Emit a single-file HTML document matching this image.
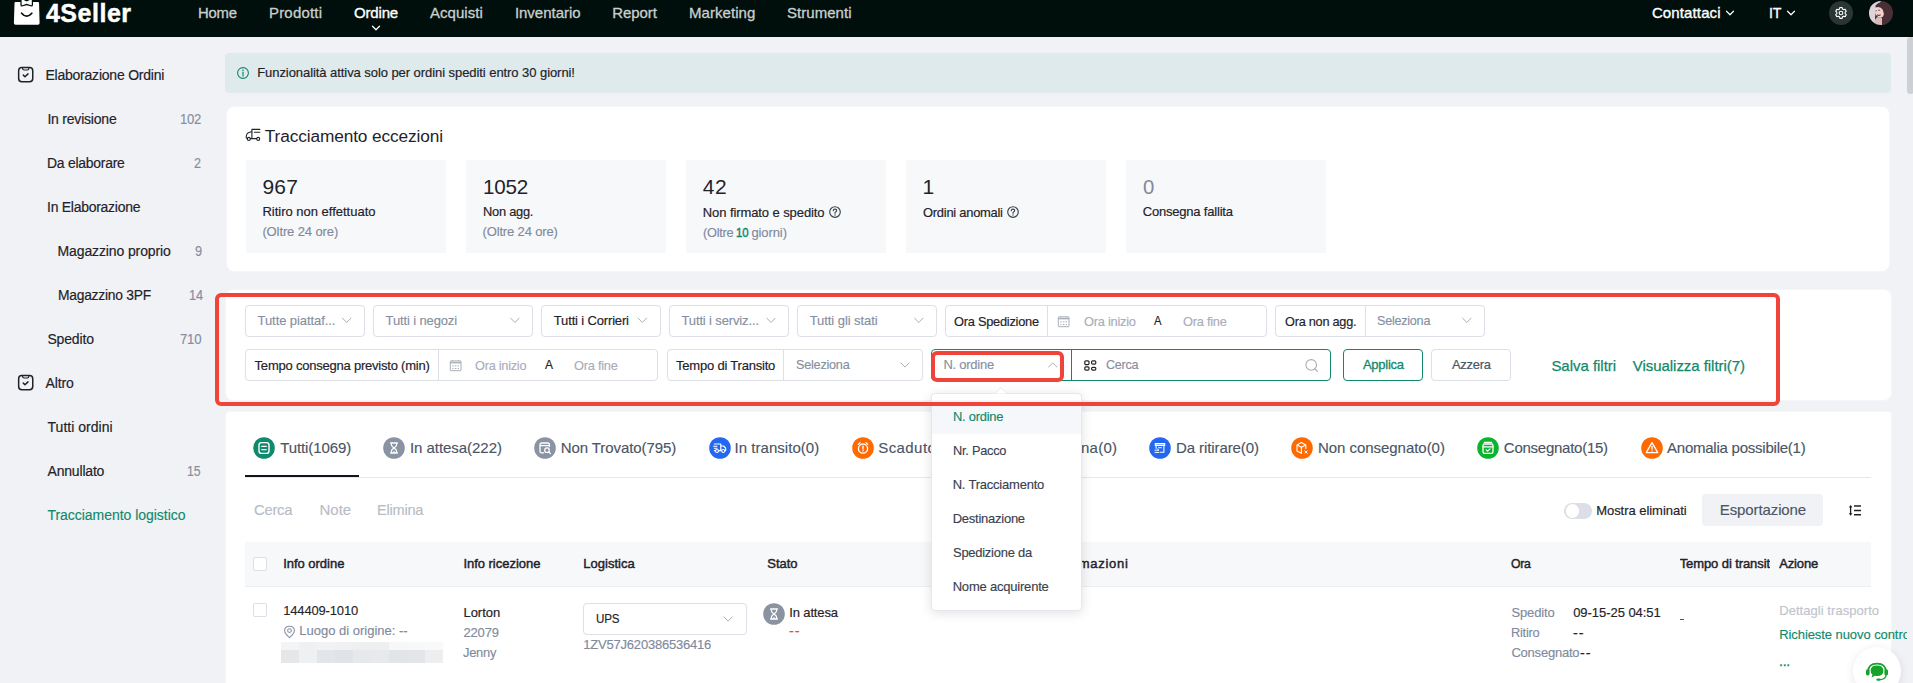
<!DOCTYPE html>
<html lang="it"><head><meta charset="utf-8"><title>4Seller - Tracciamento logistico</title>
<style>
html,body{margin:0;padding:0;}
body{width:1913px;height:683px;overflow:hidden;position:relative;background:#f0f2f6;font-family:"Liberation Sans", sans-serif;}
#pg{position:absolute;left:0;top:0;width:1913px;height:683px;overflow:hidden;}
#pg div,#pg svg,#pg span{position:absolute;box-sizing:border-box;}
#pg span{white-space:nowrap;line-height:20px;height:20px;}
</style></head><body><div id="pg">
<div style="left:0px;top:0px;width:1913px;height:37px;background:#010f0c;"></div>
<svg style="left:12px;top:0px;" width="30" height="26" viewBox="0 0 30 26" fill="none">
<path d="M3.6 2 H26 Q27 2 27.05 3 L27.6 23.1 Q27.6 24.7 26 24.7 H3.5 Q1.9 24.7 1.9 23.1 L2.5 3 Q2.55 2 3.6 2 Z" fill="#fff"/>
<path d="M8.4 -1 H21 V5 Q21 6.6 19.4 6.6 L14.7 5.2 L10 6.6 Q8.4 6.6 8.4 5 Z" fill="#010f0c"/>
<path d="M9.6 -1 L14.7 1.5 L19.8 -1 V4.6 Q19.8 5.4 19 5.2 L14.7 3.7 L10.4 5.2 Q9.6 5.4 9.6 4.6 Z" fill="#fff"/>
<path d="M9.6 13.2 Q14.7 19.2 19.8 13.2" stroke="#010f0c" stroke-width="1.7" stroke-linecap="round"/>
</svg>
<span id="t0" style="left:45.9px;top:3px;font-size:25px;color:#fff;font-weight:700;letter-spacing:0.531px;-webkit-text-stroke:0.45px #fff;">4Seller</span>
<span id="t1" style="left:198.2px;top:3px;font-size:15px;color:#c9cfce;letter-spacing:-0.250px;transform:scaleX(0.9907);transform-origin:0 50%;-webkit-text-stroke:0.3px #c9cfce;">Home</span>
<span id="t2" style="left:269px;top:3px;font-size:15px;color:#c9cfce;letter-spacing:0.185px;-webkit-text-stroke:0.3px #c9cfce;">Prodotti</span>
<span id="t3" style="left:430px;top:3px;font-size:15px;color:#c9cfce;letter-spacing:0.038px;-webkit-text-stroke:0.3px #c9cfce;">Acquisti</span>
<span id="t4" style="left:514.9px;top:3px;font-size:15px;color:#c9cfce;letter-spacing:-0.019px;-webkit-text-stroke:0.3px #c9cfce;">Inventario</span>
<span id="t5" style="left:612.2px;top:3px;font-size:15px;color:#c9cfce;letter-spacing:-0.066px;-webkit-text-stroke:0.3px #c9cfce;">Report</span>
<span id="t6" style="left:689px;top:3px;font-size:15px;color:#c9cfce;letter-spacing:0.055px;-webkit-text-stroke:0.3px #c9cfce;">Marketing</span>
<span id="t7" style="left:786.9px;top:3px;font-size:15px;color:#c9cfce;letter-spacing:0.062px;-webkit-text-stroke:0.3px #c9cfce;">Strumenti</span>
<span id="t8" style="left:354px;top:3px;font-size:15px;color:#fff;letter-spacing:-0.166px;-webkit-text-stroke:0.35px #fff;">Ordine</span>
<svg style="left:0;top:0" width="1913" height="683" fill="none"><path d="M372.5 26.25 L376 29.75 L379.5 26.25" stroke="#fff" stroke-width="1.3" stroke-linecap="round" stroke-linejoin="round"/></svg>
<span id="t9" style="left:1651.9px;top:3px;font-size:15px;color:#fff;letter-spacing:0.128px;-webkit-text-stroke:0.35px #fff;">Contattaci</span>
<svg style="left:0;top:0" width="1913" height="683" fill="none"><path d="M1726.5 11.25 L1730 14.75 L1733.5 11.25" stroke="#fff" stroke-width="1.2" stroke-linecap="round" stroke-linejoin="round"/></svg>
<span id="t10" style="left:1768.5px;top:3px;font-size:15px;color:#fff;letter-spacing:-0.250px;transform:scaleX(0.9394);transform-origin:0 50%;-webkit-text-stroke:0.35px #fff;">IT</span>
<svg style="left:0;top:0" width="1913" height="683" fill="none"><path d="M1787.5 11.25 L1791 14.75 L1794.5 11.25" stroke="#fff" stroke-width="1.2" stroke-linecap="round" stroke-linejoin="round"/></svg>
<div style="left:1829px;top:1px;width:24px;height:24px;border-radius:50%;background:#2a3634;"></div>
<svg style="left:1833px;top:5px;" width="16" height="16" viewBox="0 0 16 16" fill="none">
<g transform="translate(8 8) scale(.86) translate(-8 -8)"><circle cx="8" cy="8" r="2.1" stroke="#fff" stroke-width="1.3"/>
<path d="M6.7 1.6 h2.6 l.45 1.75 l1.35 .78 l1.75 -.5 l1.3 2.25 l-1.3 1.25 v1.56 l1.3 1.25 l-1.3 2.25 l-1.75 -.5 l-1.35 .78 l-.45 1.75 h-2.6 l-.45 -1.75 l-1.35 -.78 l-1.75 .5 l-1.3 -2.25 l1.3 -1.25 v-1.56 l-1.3 -1.25 l1.3 -2.25 l1.75 .5 l1.35 -.78 z" stroke="#fff" stroke-width="1.3" stroke-linejoin="round"/></g>
</svg>
<svg style="left:1869px;top:1px;" width="24" height="24" viewBox="0 0 24 24" fill="none">
<defs><clipPath id="av"><circle cx="12" cy="12" r="12"/></clipPath></defs>
<g clip-path="url(#av)">
<rect width="24" height="24" fill="#4a3036"/>
<path d="M0 0 H12 Q5 9 6 24 H0 Z" fill="#ddd3d8"/>
<path d="M5 24 Q5 18 8.6 16 L13 17 V24 Z" fill="#d9bdb9"/>
<ellipse cx="10.6" cy="10.4" rx="4.6" ry="6.4" transform="rotate(-14 10.6 10.4)" fill="#ecd5d0"/>
<path d="M6.5 4.5 Q10 0 16 1.5 Q22 4 21.5 12 Q21 19 19 24 H13 Q16.5 15 13.6 8.6 Q11.5 5 6.5 6.4 Z" fill="#4a3036"/>
<path d="M9 9.2 h2.2 M6.4 9.8 h1.4" stroke="#5a3b40" stroke-width=".8"/>
<path d="M8.4 14 q1.3 1 2.8 -.1" stroke="#c22b2b" stroke-width="1.2" stroke-linecap="round"/>
</g></svg>
<svg style="left:17.3px;top:66.3px;" width="17" height="17" viewBox="0 0 17 17" fill="none">
<rect x="1.65" y="1.55" width="14.1" height="14.1" rx="3.2" stroke="#1f2329" stroke-width="1.5"/>
<path d="M5.6 1.8 V2.5 Q5.6 4 7.1 4 H10.3 Q11.8 4 11.8 2.5 V1.8" stroke="#1f2329" stroke-width="1.2"/>
<path d="M6.3 9.1 L8 10.8 L11 7.9" stroke="#1f2329" stroke-width="1.5" stroke-linecap="round" stroke-linejoin="round"/>
</svg>
<span id="t11" style="left:45.4px;top:65px;font-size:14px;color:#1f2329;letter-spacing:-0.220px;-webkit-text-stroke:0.18px #1f2329;">Elaborazione Ordini</span>
<span id="t12" style="left:47.4px;top:109px;font-size:14px;color:#1f2329;letter-spacing:-0.209px;-webkit-text-stroke:0.18px #1f2329;">In revisione</span>
<span id="t13" style="left:179.7px;top:109px;font-size:14px;color:#858e9f;letter-spacing:-0.250px;transform:scaleX(0.9318);transform-origin:0 50%;-webkit-text-stroke:0.14px #858e9f;">102</span>
<span id="t14" style="left:47.4px;top:153px;font-size:14px;color:#1f2329;letter-spacing:-0.250px;transform:scaleX(0.9950);transform-origin:0 50%;-webkit-text-stroke:0.18px #1f2329;">Da elaborare</span>
<span id="t15" style="left:194px;top:153px;font-size:14px;color:#858e9f;transform:scaleX(0.8978);transform-origin:0 50%;-webkit-text-stroke:0.14px #858e9f;">2</span>
<span id="t16" style="left:47.4px;top:197px;font-size:14px;color:#1f2329;letter-spacing:-0.250px;transform:scaleX(0.9968);transform-origin:0 50%;-webkit-text-stroke:0.18px #1f2329;">In Elaborazione</span>
<span id="t17" style="left:57.5px;top:241px;font-size:14px;color:#1f2329;letter-spacing:-0.117px;-webkit-text-stroke:0.18px #1f2329;">Magazzino proprio</span>
<span id="t18" style="left:195.3px;top:241px;font-size:14px;color:#858e9f;transform:scaleX(0.9106);transform-origin:0 50%;-webkit-text-stroke:0.14px #858e9f;">9</span>
<span id="t19" style="left:57.5px;top:285px;font-size:14px;color:#1f2329;letter-spacing:-0.250px;transform:scaleX(0.9875);transform-origin:0 50%;-webkit-text-stroke:0.18px #1f2329;">Magazzino 3PF</span>
<span id="t20" style="left:188.8px;top:285px;font-size:14px;color:#858e9f;letter-spacing:-0.250px;transform:scaleX(0.9134);transform-origin:0 50%;-webkit-text-stroke:0.14px #858e9f;">14</span>
<span id="t21" style="left:47.4px;top:329px;font-size:14px;color:#1f2329;letter-spacing:-0.147px;-webkit-text-stroke:0.18px #1f2329;">Spedito</span>
<span id="t22" style="left:179.5px;top:329px;font-size:14px;color:#858e9f;letter-spacing:-0.250px;transform:scaleX(0.9405);transform-origin:0 50%;-webkit-text-stroke:0.14px #858e9f;">710</span>
<svg style="left:17.3px;top:374.3px;" width="17" height="17" viewBox="0 0 17 17" fill="none">
<rect x="1.65" y="1.55" width="14.1" height="14.1" rx="3.2" stroke="#1f2329" stroke-width="1.5"/>
<path d="M5.6 1.8 V2.5 Q5.6 4 7.1 4 H10.3 Q11.8 4 11.8 2.5 V1.8" stroke="#1f2329" stroke-width="1.2"/>
<path d="M6.3 9.1 L8 10.8 L11 7.9" stroke="#1f2329" stroke-width="1.5" stroke-linecap="round" stroke-linejoin="round"/>
</svg>
<span id="t23" style="left:45.5px;top:373px;font-size:14px;color:#1f2329;letter-spacing:-0.099px;-webkit-text-stroke:0.18px #1f2329;">Altro</span>
<span id="t24" style="left:47.5px;top:417px;font-size:14px;color:#1f2329;letter-spacing:0.032px;-webkit-text-stroke:0.18px #1f2329;">Tutti ordini</span>
<span id="t25" style="left:47.5px;top:461px;font-size:14px;color:#1f2329;letter-spacing:-0.186px;-webkit-text-stroke:0.18px #1f2329;">Annullato</span>
<span id="t26" style="left:187px;top:461px;font-size:14px;color:#858e9f;letter-spacing:-0.250px;transform:scaleX(0.8807);transform-origin:0 50%;-webkit-text-stroke:0.14px #858e9f;">15</span>
<span id="t27" style="left:47.5px;top:505px;font-size:14px;color:#10896b;letter-spacing:-0.036px;-webkit-text-stroke:0.14px #10896b;">Tracciamento logistico</span>
<div style="left:225px;top:53px;width:1666px;height:40px;background:#deeaeb;border-radius:4px;"></div>
<svg style="left:236px;top:66px;" width="14" height="14" viewBox="0 0 14 14" fill="none"><circle cx="7" cy="7" r="5.4" stroke="#10896b" stroke-width="1.1"/><path d="M7 6.2 V10" stroke="#10896b" stroke-width="1.2" stroke-linecap="round"/><circle cx="7" cy="4.2" r=".8" fill="#10896b"/></svg>
<span id="t28" style="left:257.2px;top:63px;font-size:13px;color:#1f2329;letter-spacing:-0.064px;-webkit-text-stroke:0.18px #1f2329;">Funzionalità attiva solo per ordini spediti entro 30 giorni!</span>
<div style="left:226px;top:106px;width:1664px;height:166px;background:#fff;border-radius:8px;border:1px solid #f5f6fa;"></div>
<svg style="left:245px;top:128px;" width="16" height="15" viewBox="0 0 16 15" fill="none">
<path d="M6.9 3.7 Q1.5 4 1.2 8.6 V9.4 Q1.2 10.3 2.2 10.5" stroke="#1f2329" stroke-width="1.1" stroke-linecap="round"/>
<path d="M6.9 1.4 V10.3 M6.9 1.4 H14.8 M9.4 4.2 H14.8 M5.4 10.6 H11.6" stroke="#1f2329" stroke-width="1.1" stroke-linecap="round"/>
<circle cx="3.8" cy="10.9" r="1.5" stroke="#1f2329" stroke-width="1.1"/>
<circle cx="13.2" cy="10.9" r="1.5" stroke="#1f2329" stroke-width="1.1"/>
</svg>
<span id="t29" style="left:264.8px;top:126px;font-size:17.3px;color:#1f2329;letter-spacing:-0.128px;">Tracciamento eccezioni</span>
<div style="left:246px;top:160px;width:200px;height:92.6px;background:#f7f8fa;"></div>
<div style="left:466px;top:160px;width:200px;height:92.6px;background:#f7f8fa;"></div>
<div style="left:686px;top:160px;width:200px;height:92.6px;background:#f7f8fa;"></div>
<div style="left:906px;top:160px;width:200px;height:92.6px;background:#f7f8fa;"></div>
<div style="left:1126px;top:160px;width:200px;height:92.6px;background:#f7f8fa;"></div>
<span id="t30" style="left:262.4px;top:177px;font-size:21px;color:#1f2329;letter-spacing:0.277px;">967</span>
<span id="t31" style="left:262.4px;top:202px;font-size:13px;color:#1f2329;letter-spacing:-0.007px;-webkit-text-stroke:0.18px #1f2329;">Ritiro non effettuato</span>
<span id="t32" style="left:262.4px;top:222px;font-size:13px;color:#7f8a9c;letter-spacing:-0.109px;-webkit-text-stroke:0.14px #7f8a9c;">(Oltre 24 ore)</span>
<span id="t33" style="left:482.5px;top:177px;font-size:21px;color:#1f2329;letter-spacing:-0.250px;transform:scaleX(0.9811);transform-origin:0 50%;">1052</span>
<span id="t34" style="left:482.5px;top:202px;font-size:13px;color:#1f2329;letter-spacing:-0.250px;transform:scaleX(0.9879);transform-origin:0 50%;-webkit-text-stroke:0.18px #1f2329;">Non agg.</span>
<span id="t35" style="left:482.5px;top:222px;font-size:13px;color:#7f8a9c;letter-spacing:-0.147px;-webkit-text-stroke:0.14px #7f8a9c;">(Oltre 24 ore)</span>
<span id="t36" style="left:702.8px;top:177px;font-size:21px;color:#1f2329;letter-spacing:0.441px;">42</span>
<span id="t37" style="left:702.8px;top:203px;font-size:13px;color:#1f2329;letter-spacing:-0.089px;-webkit-text-stroke:0.18px #1f2329;">Non firmato e spedito</span>
<svg style="left:828.3px;top:205px;" width="14" height="14" viewBox="0 0 14 14" fill="none"><circle cx="7" cy="7" r="5.3" stroke="#3b424d" stroke-width="1.15"/><path d="M5.3 5.7 Q5.3 4.1 7 4.1 Q8.7 4.1 8.7 5.6 Q8.7 6.6 7.6 7.1 Q7 7.4 7 8.3" stroke="#3b424d" stroke-width="1.15" stroke-linecap="round"/><circle cx="7" cy="10" r=".7" fill="#3b424d"/></svg>
<span id="t38" style="left:702.8px;top:223px;font-size:13px;color:#7f8a9c;letter-spacing:-0.250px;transform:scaleX(0.9824);transform-origin:0 50%;-webkit-text-stroke:0.14px #7f8a9c;">(Oltre</span>
<span id="t39" style="left:736.2px;top:223px;font-size:13px;color:#10896b;-webkit-text-stroke:0.45px #10896b;letter-spacing:-0.250px;transform:scaleX(0.8791);transform-origin:0 50%;">10</span>
<span id="t40" style="left:751.4px;top:223px;font-size:13px;color:#7f8a9c;letter-spacing:-0.087px;-webkit-text-stroke:0.14px #7f8a9c;">giorni)</span>
<span id="t41" style="left:922.6px;top:177px;font-size:21px;color:#1f2329;">1</span>
<span id="t42" style="left:922.6px;top:203px;font-size:13px;color:#1f2329;letter-spacing:-0.250px;transform:scaleX(0.9928);transform-origin:0 50%;-webkit-text-stroke:0.18px #1f2329;">Ordini anomali</span>
<svg style="left:1006px;top:205px;" width="14" height="14" viewBox="0 0 14 14" fill="none"><circle cx="7" cy="7" r="5.3" stroke="#3b424d" stroke-width="1.15"/><path d="M5.3 5.7 Q5.3 4.1 7 4.1 Q8.7 4.1 8.7 5.6 Q8.7 6.6 7.6 7.1 Q7 7.4 7 8.3" stroke="#3b424d" stroke-width="1.15" stroke-linecap="round"/><circle cx="7" cy="10" r=".7" fill="#3b424d"/></svg>
<span id="t43" style="left:1142.7px;top:177px;font-size:21px;color:#7f8a9c;transform:scaleX(0.9668);transform-origin:0 50%;">0</span>
<span id="t44" style="left:1142.7px;top:202px;font-size:13px;color:#1f2329;letter-spacing:-0.196px;-webkit-text-stroke:0.18px #1f2329;">Consegna fallita</span>
<div style="left:225px;top:289px;width:1667px;height:112px;background:#fff;border-radius:8px;border:1px solid #f5f6fa;"></div>
<div style="left:245px;top:305px;width:120px;height:32px;border:1px solid #dcdfe6;border-radius:4px;background:#fff;"></div>
<span id="t45" style="left:257.6px;top:311px;font-size:13px;color:#858fa1;letter-spacing:-0.081px;-webkit-text-stroke:0.14px #858fa1;">Tutte piattaf...</span>
<svg style="left:0;top:0" width="1913" height="683" fill="none"><path d="M342.5 318.2 L346.7 322.40000000000003 L350.9 318.2" stroke="#a8adb8" stroke-width="1.0" stroke-linecap="round" stroke-linejoin="round"/></svg>
<div style="left:373.3px;top:305px;width:159.4px;height:32px;border:1px solid #dcdfe6;border-radius:4px;background:#fff;"></div>
<span id="t46" style="left:385.6px;top:311px;font-size:13px;color:#858fa1;letter-spacing:-0.133px;-webkit-text-stroke:0.14px #858fa1;">Tutti i negozi</span>
<svg style="left:0;top:0" width="1913" height="683" fill="none"><path d="M510.7 318.2 L514.9 322.40000000000003 L519.1 318.2" stroke="#a8adb8" stroke-width="1.0" stroke-linecap="round" stroke-linejoin="round"/></svg>
<div style="left:541.2px;top:305px;width:119.8px;height:32px;border:1px solid #dcdfe6;border-radius:4px;background:#fff;"></div>
<span id="t47" style="left:553.8px;top:311px;font-size:13px;color:#1f2329;letter-spacing:-0.155px;-webkit-text-stroke:0.18px #1f2329;">Tutti i Corrieri</span>
<svg style="left:0;top:0" width="1913" height="683" fill="none"><path d="M638.0999999999999 318.2 L642.3 322.40000000000003 L646.5 318.2" stroke="#a8adb8" stroke-width="1.0" stroke-linecap="round" stroke-linejoin="round"/></svg>
<div style="left:669.2px;top:305px;width:119.8px;height:32px;border:1px solid #dcdfe6;border-radius:4px;background:#fff;"></div>
<span id="t48" style="left:681.5px;top:311px;font-size:13px;color:#858fa1;letter-spacing:-0.138px;-webkit-text-stroke:0.14px #858fa1;">Tutti i serviz...</span>
<svg style="left:0;top:0" width="1913" height="683" fill="none"><path d="M766.8 318.2 L771 322.40000000000003 L775.2 318.2" stroke="#a8adb8" stroke-width="1.0" stroke-linecap="round" stroke-linejoin="round"/></svg>
<div style="left:797.4px;top:305px;width:139.7px;height:32px;border:1px solid #dcdfe6;border-radius:4px;background:#fff;"></div>
<span id="t49" style="left:809.7px;top:311px;font-size:13px;color:#858fa1;letter-spacing:-0.062px;-webkit-text-stroke:0.14px #858fa1;">Tutti gli stati</span>
<svg style="left:0;top:0" width="1913" height="683" fill="none"><path d="M914.5999999999999 318.2 L918.8 322.40000000000003 L923.0 318.2" stroke="#a8adb8" stroke-width="1.0" stroke-linecap="round" stroke-linejoin="round"/></svg>
<div style="left:945.4px;top:305px;width:321.2px;height:32px;border:1px solid #dcdfe6;border-radius:4px;background:#fff;"></div>
<div style="left:1047.4px;top:305px;width:1px;height:32px;background:#dcdfe6;"></div>
<span id="t50" style="left:954.2px;top:312px;font-size:13px;color:#1f2329;letter-spacing:-0.250px;transform:scaleX(0.9852);transform-origin:0 50%;-webkit-text-stroke:0.18px #1f2329;">Ora Spedizione</span>
<svg style="left:1057.4px;top:314.6px;" width="13" height="13" viewBox="0 0 13 13" fill="none"><rect x="1.3" y="1.9" width="10.7" height="9.8" rx=".4" stroke="#a9aeb8" stroke-width="1"/><path d="M1.3 3.6 H12" stroke="#a9aeb8" stroke-width="1.5"/><path d="M3.6 1 V2 M9.7 1 V2" stroke="#a9aeb8" stroke-width=".9"/><path d="M3.3 6.9 h1.5 M5.9 6.9 h1.5 M8.5 6.9 h1.5 M3.3 9.5 h1.2 M5.9 9.5 h1.5 M8.8 9.5 h1.2" stroke="#a9aeb8" stroke-width="1"/></svg>
<span id="t51" style="left:1084.2px;top:312px;font-size:13px;color:#a8adb8;letter-spacing:-0.250px;transform:scaleX(0.9853);transform-origin:0 50%;-webkit-text-stroke:0.14px #a8adb8;">Ora inizio</span>
<span id="t52" style="left:1153.7px;top:311px;font-size:13px;color:#1f2329;transform:scaleX(0.8649);transform-origin:0 50%;-webkit-text-stroke:0.18px #1f2329;">A</span>
<span id="t53" style="left:1183px;top:312px;font-size:13px;color:#a8adb8;letter-spacing:-0.250px;transform:scaleX(0.9865);transform-origin:0 50%;-webkit-text-stroke:0.14px #a8adb8;">Ora fine</span>
<div style="left:1275.4px;top:305px;width:209.2px;height:32px;border:1px solid #dcdfe6;border-radius:4px;background:#fff;"></div>
<div style="left:1365.2px;top:305px;width:1px;height:32px;background:#dcdfe6;"></div>
<span id="t54" style="left:1284.9px;top:312px;font-size:13px;color:#1f2329;letter-spacing:-0.250px;transform:scaleX(0.9776);transform-origin:0 50%;-webkit-text-stroke:0.18px #1f2329;">Ora non agg.</span>
<span id="t55" style="left:1377px;top:311px;font-size:13px;color:#858fa1;letter-spacing:-0.250px;transform:scaleX(0.9690);transform-origin:0 50%;-webkit-text-stroke:0.14px #858fa1;">Seleziona</span>
<svg style="left:0;top:0" width="1913" height="683" fill="none"><path d="M1462.6 318.2 L1466.8 322.40000000000003 L1471.0 318.2" stroke="#a8adb8" stroke-width="1.0" stroke-linecap="round" stroke-linejoin="round"/></svg>
<div style="left:245px;top:349px;width:412.9px;height:32px;border:1px solid #dcdfe6;border-radius:4px;background:#fff;"></div>
<div style="left:438.1px;top:349px;width:1px;height:32px;background:#dcdfe6;"></div>
<span id="t56" style="left:254.6px;top:356px;font-size:13px;color:#1f2329;letter-spacing:-0.220px;-webkit-text-stroke:0.18px #1f2329;">Tempo consegna previsto (min)</span>
<svg style="left:448.7px;top:358.6px;" width="13" height="13" viewBox="0 0 13 13" fill="none"><rect x="1.3" y="1.9" width="10.7" height="9.8" rx=".4" stroke="#a9aeb8" stroke-width="1"/><path d="M1.3 3.6 H12" stroke="#a9aeb8" stroke-width="1.5"/><path d="M3.6 1 V2 M9.7 1 V2" stroke="#a9aeb8" stroke-width=".9"/><path d="M3.3 6.9 h1.5 M5.9 6.9 h1.5 M8.5 6.9 h1.5 M3.3 9.5 h1.2 M5.9 9.5 h1.5 M8.8 9.5 h1.2" stroke="#a9aeb8" stroke-width="1"/></svg>
<span id="t57" style="left:475.2px;top:356px;font-size:13px;color:#a8adb8;letter-spacing:-0.250px;transform:scaleX(0.9778);transform-origin:0 50%;-webkit-text-stroke:0.14px #a8adb8;">Ora inizio</span>
<span id="t58" style="left:544.5px;top:355px;font-size:13px;color:#1f2329;transform:scaleX(0.9225);transform-origin:0 50%;-webkit-text-stroke:0.18px #1f2329;">A</span>
<span id="t59" style="left:573.8px;top:356px;font-size:13px;color:#a8adb8;letter-spacing:-0.250px;transform:scaleX(0.9865);transform-origin:0 50%;-webkit-text-stroke:0.14px #a8adb8;">Ora fine</span>
<div style="left:666.7px;top:349px;width:255.9px;height:32px;border:1px solid #dcdfe6;border-radius:4px;background:#fff;"></div>
<div style="left:783.1px;top:349px;width:1px;height:32px;background:#dcdfe6;"></div>
<span id="t60" style="left:676px;top:356px;font-size:13px;color:#1f2329;letter-spacing:-0.207px;-webkit-text-stroke:0.18px #1f2329;">Tempo di Transito</span>
<span id="t61" style="left:795.6px;top:355px;font-size:13px;color:#858fa1;letter-spacing:-0.250px;transform:scaleX(0.9744);transform-origin:0 50%;-webkit-text-stroke:0.14px #858fa1;">Seleziona</span>
<svg style="left:0;top:0" width="1913" height="683" fill="none"><path d="M900.8 362.9 L905 367.1 L909.2 362.9" stroke="#a8adb8" stroke-width="1.0" stroke-linecap="round" stroke-linejoin="round"/></svg>
<div style="left:931px;top:349px;width:399.6px;height:32px;border:1px solid #10896b;border-radius:4px;background:#fff;"></div>
<div style="left:1071px;top:349px;width:1px;height:32px;background:#10896b;"></div>
<span id="t62" style="left:943.4px;top:355px;font-size:13px;color:#858fa1;letter-spacing:-0.250px;-webkit-text-stroke:0.14px #858fa1;">N. ordine</span>
<svg style="left:0;top:0" width="1913" height="683" fill="none"><path d="M1048.6 367.1 L1052.8 362.9 L1057.0 367.1" stroke="#a8adb8" stroke-width="1.0" stroke-linecap="round" stroke-linejoin="round"/></svg>
<svg style="left:1083.6px;top:359.6px;" width="13" height="12" viewBox="0 0 13 12" fill="none">
<rect x=".8" y=".8" width="4.2" height="3.8" rx="1.1" stroke="#1f2329" stroke-width="1.2"/>
<rect x="7.6" y=".8" width="4.2" height="3.4" rx="1.1" stroke="#1f2329" stroke-width="1.2"/>
<rect x=".8" y="6.8" width="4.2" height="3.4" rx="1.1" stroke="#1f2329" stroke-width="1.2"/>
<rect x="7.6" y="7.4" width="4.2" height="2.8" rx="1.1" stroke="#1f2329" stroke-width="1.2"/>
</svg>
<span id="t63" style="left:1105.8px;top:355px;font-size:13px;color:#858fa1;letter-spacing:-0.250px;transform:scaleX(0.9677);transform-origin:0 50%;-webkit-text-stroke:0.14px #858fa1;">Cerca</span>
<svg style="left:1304px;top:358px;" width="15" height="15" viewBox="0 0 15 15" fill="none"><circle cx="7.2" cy="6.9" r="5.3" stroke="#a8adb8" stroke-width="1.1"/><path d="M11 11 L13.4 13.4" stroke="#a8adb8" stroke-width="1.1" stroke-linecap="round"/></svg>
<div style="left:931.2px;top:350.6px;width:132.6px;height:31.8px;border:4px solid #f0443a;border-radius:6px;"></div>
<div style="left:1343px;top:349px;width:79.7px;height:32px;border:1px solid #10896b;border-radius:4px;background:#fff;"></div>
<span id="t64" style="left:1362.9px;top:355px;font-size:13px;color:#10896b;letter-spacing:-0.240px;-webkit-text-stroke:0.3px #10896b;">Applica</span>
<div style="left:1431.2px;top:349px;width:79.5px;height:32px;border:1px solid #dcdfe6;border-radius:4px;background:#fff;"></div>
<span id="t65" style="left:1452.3px;top:355px;font-size:13px;color:#4a5565;letter-spacing:-0.250px;transform:scaleX(0.9919);transform-origin:0 50%;-webkit-text-stroke:0.2px #4a5565;">Azzera</span>
<span id="t66" style="left:1551.4px;top:356px;font-size:15px;color:#10896b;letter-spacing:-0.030px;-webkit-text-stroke:0.25px #10896b;">Salva filtri</span>
<span id="t67" style="left:1632.8px;top:356px;font-size:15px;color:#10896b;letter-spacing:-0.047px;-webkit-text-stroke:0.25px #10896b;">Visualizza filtri(7)</span>
<div style="left:225px;top:411px;width:1667px;height:300px;background:#fff;border-radius:4px 4px 0 0;border:1px solid #f5f6fa;"></div>
<div style="left:245px;top:477px;width:1626px;height:1px;background:#e6e8ee;"></div>
<div style="left:245px;top:475px;width:113.8px;height:2px;background:#12161c;"></div>
<svg style="left:253.1px;top:436.8px;" width="22" height="22" viewBox="0 0 22 22" fill="none"><circle cx="11" cy="11" r="10.8" fill="#0f8a6c"/><rect x="6" y="5.6" width="10" height="10.8" rx="2.4" stroke="#fff" stroke-width="1.4"/><path d="M8.8 9.4 H13.2 M8.8 12.6 H13.2" stroke="#fff" stroke-width="1.3" stroke-linecap="round"/></svg>
<span id="t68" style="left:280.2px;top:438px;font-size:15px;color:#4a5565;letter-spacing:-0.098px;-webkit-text-stroke:0.14px #4a5565;">Tutti(1069)</span>
<svg style="left:383.1px;top:436.8px;" width="22" height="22" viewBox="0 0 22 22" fill="none"><circle cx="11" cy="11" r="10.8" fill="#8a93a2"/><path d="M7.6 6 H14.4 M7.6 16 H14.4" stroke="#fff" stroke-width="1.3" stroke-linecap="round"/><path d="M8.4 6.2 V7.8 Q8.4 9.3 11 11 Q13.6 9.3 13.6 7.8 V6.2 M8.4 15.8 V14.2 Q8.4 12.7 11 11 Q13.6 12.7 13.6 14.2 V15.8" stroke="#fff" stroke-width="1.2"/><path d="M9.5 15.4 Q11 13 12.5 15.4 Z" fill="#fff"/></svg>
<span id="t69" style="left:409.9px;top:438px;font-size:15px;color:#4a5565;letter-spacing:-0.036px;-webkit-text-stroke:0.14px #4a5565;">In attesa(222)</span>
<svg style="left:534px;top:436.8px;" width="22" height="22" viewBox="0 0 22 22" fill="none"><circle cx="11" cy="11" r="10.8" fill="#8a93a2"/><path d="M15.4 9.6 V7.6 Q15.4 6 13.8 6 H7.6 Q6 6 6 7.6 V14.2 Q6 15.8 7.6 15.8 H9.6" stroke="#fff" stroke-width="1.3" stroke-linecap="round"/><path d="M6 8.6 H15.4" stroke="#fff" stroke-width="1.2"/><circle cx="13" cy="13.2" r="2.3" stroke="#fff" stroke-width="1.2"/><path d="M14.8 15 L16.4 16.6" stroke="#fff" stroke-width="1.2" stroke-linecap="round"/></svg>
<span id="t70" style="left:560.8px;top:438px;font-size:15px;color:#4a5565;letter-spacing:-0.089px;-webkit-text-stroke:0.14px #4a5565;">Non Trovato(795)</span>
<svg style="left:709.1px;top:436.8px;" width="22" height="22" viewBox="0 0 22 22" fill="none"><circle cx="11" cy="11" r="10.8" fill="#2468f2"/><path d="M5.4 7 H11.8 V13.6 H10.2 M5.4 13.6 H6" stroke="#fff" stroke-width="1.2" stroke-linecap="round" stroke-linejoin="round"/><path d="M11.8 9 H14.6 L16.6 11.2 V13.6 H16" stroke="#fff" stroke-width="1.2" stroke-linejoin="round"/><circle cx="8" cy="14" r="1.5" stroke="#fff" stroke-width="1.1"/><circle cx="14.2" cy="14" r="1.5" stroke="#fff" stroke-width="1.1"/><path d="M4.6 9.2 H8 M5.4 11.2 H8" stroke="#fff" stroke-width="1.1" stroke-linecap="round"/></svg>
<span id="t71" style="left:734.6px;top:438px;font-size:15px;color:#4a5565;letter-spacing:0.031px;-webkit-text-stroke:0.14px #4a5565;">In transito(0)</span>
<svg style="left:852.1px;top:436.8px;" width="22" height="22" viewBox="0 0 22 22" fill="none"><circle cx="11" cy="11" r="10.8" fill="#ff6a00"/><circle cx="11" cy="11.6" r="4.6" stroke="#fff" stroke-width="1.3"/><path d="M11 9.2 V12" stroke="#fff" stroke-width="1.3" stroke-linecap="round"/><circle cx="11" cy="13.8" r=".75" fill="#fff"/><path d="M6.2 7.4 L8 5.8 M15.8 7.4 L14 5.8" stroke="#fff" stroke-width="1.3" stroke-linecap="round"/></svg>
<span id="t72" style="left:878.2px;top:438px;font-size:15px;color:#4a5565;letter-spacing:0.436px;-webkit-text-stroke:0.14px #4a5565;">Scaduto(0)</span>
<svg style="left:987.6px;top:436.8px;" width="22" height="22" viewBox="0 0 22 22" fill="none"><circle cx="11" cy="11" r="10.8" fill="#2468f2"/><path d="M6.3 8.4 V6.6 H15.7 V8.4 Z" stroke="#fff" stroke-width="1.1" stroke-linejoin="round"/><path d="M7.1 8.6 V11.2 M14.9 8.6 V15.2 H11.4" stroke="#fff" stroke-width="1.1" stroke-linecap="round" stroke-linejoin="round"/><path d="M9.6 10.7 H12.4" stroke="#fff" stroke-width="1" stroke-linecap="round"/><path d="M6 13.2 H10 L8.7 12 M6 15.4 H10" stroke="#fff" stroke-width="1" stroke-linecap="round" stroke-linejoin="round"/></svg>
<span id="t73" style="left:1013.8px;top:438px;font-size:15px;color:#4a5565;letter-spacing:0.240px;-webkit-text-stroke:0.14px #4a5565;">In consegna(0)</span>
<svg style="left:1149.1px;top:436.8px;" width="22" height="22" viewBox="0 0 22 22" fill="none"><circle cx="11" cy="11" r="10.8" fill="#2468f2"/><path d="M6.3 8.4 V6.6 H15.7 V8.4 Z" stroke="#fff" stroke-width="1.1" stroke-linejoin="round"/><path d="M7.1 8.6 V11.2 M14.9 8.6 V15.2 H11.4" stroke="#fff" stroke-width="1.1" stroke-linecap="round" stroke-linejoin="round"/><path d="M9.6 10.7 H12.4" stroke="#fff" stroke-width="1" stroke-linecap="round"/><path d="M6 13.2 H10 L8.7 12 M6 15.4 H10" stroke="#fff" stroke-width="1" stroke-linecap="round" stroke-linejoin="round"/></svg>
<span id="t74" style="left:1176.1px;top:438px;font-size:15px;color:#4a5565;letter-spacing:-0.107px;-webkit-text-stroke:0.14px #4a5565;">Da ritirare(0)</span>
<svg style="left:1291.2px;top:436.8px;" width="22" height="22" viewBox="0 0 22 22" fill="none"><circle cx="11" cy="11" r="10.8" fill="#ff6a00"/><path d="M10.4 5.6 L14.8 7.9 V11.4 M10.4 16.2 L6 13.9 V7.9 L10.4 5.6" stroke="#fff" stroke-width="1.1" stroke-linejoin="round" stroke-linecap="round"/><path d="M6 7.9 L10.4 10.2 L14.8 7.9 M10.4 10.2 V16.2" stroke="#fff" stroke-width="1.1" stroke-linejoin="round"/><path d="M13.8 13.8 L16.2 16.2 M16.2 13.8 L13.8 16.2" stroke="#fff" stroke-width="1" stroke-linecap="round"/></svg>
<span id="t75" style="left:1318px;top:438px;font-size:15px;color:#4a5565;letter-spacing:-0.043px;-webkit-text-stroke:0.14px #4a5565;">Non consegnato(0)</span>
<svg style="left:1477px;top:436.8px;" width="22" height="22" viewBox="0 0 22 22" fill="none"><circle cx="11" cy="11" r="10.8" fill="#0cb32c"/><rect x="6" y="7" width="10" height="9.4" rx="1.6" stroke="#fff" stroke-width="1.3"/><path d="M6 9.8 H16 M7.4 5.4 H14.6" stroke="#fff" stroke-width="1.3" stroke-linecap="round"/><path d="M9.2 12.8 L10.6 14.2 L13 11.8" stroke="#fff" stroke-width="1.2" stroke-linecap="round" stroke-linejoin="round"/></svg>
<span id="t76" style="left:1503.8px;top:438px;font-size:15px;color:#4a5565;letter-spacing:-0.250px;-webkit-text-stroke:0.14px #4a5565;">Consegnato(15)</span>
<svg style="left:1641px;top:436.8px;" width="22" height="22" viewBox="0 0 22 22" fill="none"><circle cx="11" cy="11" r="10.8" fill="#ff6a00"/><path d="M11 5.6 L16.8 15.6 H5.2 Z" stroke="#fff" stroke-width="1.3" stroke-linejoin="round"/><path d="M11 9.4 V12.2" stroke="#fff" stroke-width="1.3" stroke-linecap="round"/><circle cx="11" cy="14" r=".75" fill="#fff"/></svg>
<span id="t77" style="left:1667px;top:438px;font-size:15px;color:#4a5565;letter-spacing:-0.235px;-webkit-text-stroke:0.14px #4a5565;">Anomalia possibile(1)</span>
<span id="t78" style="left:254.4px;top:500px;font-size:15px;color:#b7bcc6;letter-spacing:-0.250px;transform:scaleX(0.9842);transform-origin:0 50%;-webkit-text-stroke:0.14px #b7bcc6;">Cerca</span>
<span id="t79" style="left:319.4px;top:500px;font-size:15px;color:#b7bcc6;letter-spacing:0.038px;-webkit-text-stroke:0.14px #b7bcc6;">Note</span>
<span id="t80" style="left:377.3px;top:500px;font-size:15px;color:#b7bcc6;letter-spacing:-0.250px;transform:scaleX(0.9730);transform-origin:0 50%;-webkit-text-stroke:0.14px #b7bcc6;">Elimina</span>
<div style="left:1564.2px;top:503px;width:27.8px;height:16px;border-radius:8px;background:#dcdfe6;"></div>
<div style="left:1565.6px;top:504.4px;width:13.2px;height:13.2px;border-radius:50%;background:#fff;"></div>
<span id="t81" style="left:1596.2px;top:501px;font-size:13px;color:#1f2329;letter-spacing:-0.042px;-webkit-text-stroke:0.18px #1f2329;">Mostra eliminati</span>
<div style="left:1702px;top:494px;width:121px;height:32px;background:#f0f2f5;border-radius:4px;"></div>
<span id="t82" style="left:1719.8px;top:500px;font-size:15px;color:#4a5565;letter-spacing:-0.106px;-webkit-text-stroke:0.14px #4a5565;">Esportazione</span>
<svg style="left:1848px;top:504px;" width="14" height="13" viewBox="0 0 14 13" fill="none"><path d="M6 2 H13 M6 6.4 H13 M6 10.8 H13" stroke="#1f2329" stroke-width="1.5"/><path d="M2.6 1.6 V11.2" stroke="#1f2329" stroke-width="1.3"/><path d="M.8 3.6 L2.6 1.2 L4.4 3.6 Z M.8 9.2 L2.6 11.6 L4.4 9.2 Z" fill="#1f2329"/></svg>
<div style="left:245px;top:542px;width:1626px;height:45px;background:#f7f8fa;border-bottom:1px solid #ebeef5;"></div>
<div style="left:253px;top:557px;width:14px;height:14px;border:1px solid #dcdfe6;border-radius:2px;background:#fff;"></div>
<span id="t83" style="left:283.2px;top:554px;font-size:13px;color:#1f2329;-webkit-text-stroke:0.45px #1f2329;letter-spacing:-0.024px;">Info ordine</span>
<span id="t84" style="left:463.4px;top:554px;font-size:13px;color:#1f2329;-webkit-text-stroke:0.45px #1f2329;letter-spacing:-0.025px;">Info ricezione</span>
<span id="t85" style="left:583.3px;top:554px;font-size:13px;color:#1f2329;-webkit-text-stroke:0.45px #1f2329;letter-spacing:0.023px;">Logistica</span>
<span id="t86" style="left:767.3px;top:554px;font-size:13px;color:#1f2329;-webkit-text-stroke:0.45px #1f2329;letter-spacing:-0.015px;">Stato</span>
<span id="t87" style="left:1049px;top:554px;font-size:13px;color:#1f2329;-webkit-text-stroke:0.45px #1f2329;letter-spacing:0.735px;">Informazioni</span>
<span id="t88" style="left:1511.4px;top:554px;font-size:13px;color:#1f2329;-webkit-text-stroke:0.45px #1f2329;letter-spacing:-0.250px;transform:scaleX(0.9399);transform-origin:0 50%;">Ora</span>
<div style="left:1679.7px;top:550px;width:90.6px;height:28px;overflow:hidden;">
<span id="t89" style="left:0px;top:4px;font-size:13px;color:#1f2329;-webkit-text-stroke:0.45px #1f2329;letter-spacing:-0.094px;">Tempo di transito</span>
</div>
<span id="t90" style="left:1779.2px;top:554px;font-size:13px;color:#1f2329;-webkit-text-stroke:0.45px #1f2329;letter-spacing:-0.130px;">Azione</span>
<div style="left:253px;top:603px;width:14px;height:14px;border:1px solid #dcdfe6;border-radius:2px;background:#fff;"></div>
<span id="t91" style="left:283.2px;top:601px;font-size:13px;color:#1f2329;letter-spacing:-0.164px;-webkit-text-stroke:0.12px #1f2329;">144409-1010</span>
<svg style="left:283.4px;top:624.8px;" width="13" height="14" viewBox="0 0 13 14" fill="none"><path d="M6.5 12.6 Q1.6 8.6 1.6 5.6 Q1.6 1.2 6.5 1.2 Q11.4 1.2 11.4 5.6 Q11.4 8.6 6.5 12.6 Z" stroke="#8a94a6" stroke-width="1.1" stroke-linejoin="round"/><circle cx="6.5" cy="5.6" r="1.9" stroke="#8a94a6" stroke-width="1.1"/></svg>
<span id="t92" style="left:299.3px;top:621px;font-size:13px;color:#7f8a9c;-webkit-text-stroke:0.14px #7f8a9c;">Luogo di origine: --</span>
<div style="left:280.7px;top:642.2px;width:18.1px;height:8px;background:#f3f4f5;"></div>
<div style="left:280.7px;top:650.2px;width:18.1px;height:12.4px;background:#e6e7e9;"></div>
<div style="left:298.7px;top:642.2px;width:18.1px;height:8px;background:#eff0f2;"></div>
<div style="left:298.7px;top:650.2px;width:18.1px;height:12.4px;background:#eef0f2;"></div>
<div style="left:316.7px;top:642.2px;width:18.1px;height:8px;background:#f1f2f4;"></div>
<div style="left:316.7px;top:650.2px;width:18.1px;height:12.4px;background:#e2e5e9;"></div>
<div style="left:334.7px;top:642.2px;width:18.1px;height:8px;background:#f0f1f3;"></div>
<div style="left:334.7px;top:650.2px;width:18.1px;height:12.4px;background:#e0e4e8;"></div>
<div style="left:352.7px;top:642.2px;width:18.1px;height:8px;background:#eeeff1;"></div>
<div style="left:352.7px;top:650.2px;width:18.1px;height:12.4px;background:#e6e8eb;"></div>
<div style="left:370.8px;top:642.2px;width:18.1px;height:8px;background:#efeff1;"></div>
<div style="left:370.8px;top:650.2px;width:18.1px;height:12.4px;background:#e8e9ec;"></div>
<div style="left:388.8px;top:642.2px;width:18.1px;height:8px;background:#f6f7f8;"></div>
<div style="left:388.8px;top:650.2px;width:18.1px;height:12.4px;background:#e2e5e8;"></div>
<div style="left:406.8px;top:642.2px;width:18.1px;height:8px;background:#f7f8f9;"></div>
<div style="left:406.8px;top:650.2px;width:18.1px;height:12.4px;background:#e3e5e8;"></div>
<div style="left:424.8px;top:642.2px;width:18.1px;height:8px;background:#f9f9fa;"></div>
<div style="left:424.8px;top:650.2px;width:18.1px;height:12.4px;background:#eceef0;"></div>
<span id="t93" style="left:463.4px;top:603px;font-size:13px;color:#1f2329;letter-spacing:0.005px;-webkit-text-stroke:0.2px #1f2329;">Lorton</span>
<span id="t94" style="left:463.4px;top:623px;font-size:13px;color:#7f8a9c;letter-spacing:-0.139px;-webkit-text-stroke:0.14px #7f8a9c;">22079</span>
<span id="t95" style="left:463.4px;top:643px;font-size:13px;color:#7f8a9c;letter-spacing:-0.250px;transform:scaleX(0.9910);transform-origin:0 50%;-webkit-text-stroke:0.14px #7f8a9c;">Jenny</span>
<div style="left:583.3px;top:603px;width:163.8px;height:32px;border:1px solid #dcdfe6;border-radius:4px;background:#fff;"></div>
<span id="t96" style="left:595.6px;top:609px;font-size:13px;color:#1f2329;letter-spacing:-0.250px;transform:scaleX(0.8920);transform-origin:0 50%;-webkit-text-stroke:0.18px #1f2329;">UPS</span>
<svg style="left:0;top:0" width="1913" height="683" fill="none"><path d="M723.9 616.9 L728.1 621.1 L732.3000000000001 616.9" stroke="#a8adb8" stroke-width="1.0" stroke-linecap="round" stroke-linejoin="round"/></svg>
<span id="t97" style="left:583.3px;top:635px;font-size:13px;color:#7f8a9c;letter-spacing:-0.210px;-webkit-text-stroke:0.14px #7f8a9c;">1ZV57J620386536416</span>
<svg style="left:763px;top:603px;" width="22" height="22" viewBox="0 0 22 22" fill="none"><circle cx="11" cy="11" r="10.8" fill="#8a93a2"/><path d="M7.6 6 H14.4 M7.6 16 H14.4" stroke="#fff" stroke-width="1.3" stroke-linecap="round"/><path d="M8.4 6.2 V7.8 Q8.4 9.3 11 11 Q13.6 9.3 13.6 7.8 V6.2 M8.4 15.8 V14.2 Q8.4 12.7 11 11 Q13.6 12.7 13.6 14.2 V15.8" stroke="#fff" stroke-width="1.2"/><path d="M9.5 15.4 Q11 13 12.5 15.4 Z" fill="#fff"/></svg>
<span id="t98" style="left:789.3px;top:603px;font-size:13px;color:#1f2329;letter-spacing:-0.147px;-webkit-text-stroke:0.18px #1f2329;">In attesa</span>
<span id="t99" style="left:789.3px;top:621px;font-size:13px;color:#f0443a;letter-spacing:0.800px;transform:scaleX(1.1191);transform-origin:0 50%;-webkit-text-stroke:0.14px #f0443a;">--</span>
<span id="t100" style="left:1511.4px;top:603px;font-size:13px;color:#7f8a9c;letter-spacing:-0.132px;-webkit-text-stroke:0.14px #7f8a9c;">Spedito</span>
<span id="t101" style="left:1573.2px;top:603px;font-size:13px;color:#1f2329;letter-spacing:-0.045px;-webkit-text-stroke:0.18px #1f2329;">09-15-25 04:51</span>
<span id="t102" style="left:1511.4px;top:623px;font-size:13px;color:#7f8a9c;letter-spacing:-0.250px;transform:scaleX(0.9830);transform-origin:0 50%;-webkit-text-stroke:0.14px #7f8a9c;">Ritiro</span>
<span id="t103" style="left:1573.2px;top:623px;font-size:13px;color:#1f2329;letter-spacing:0.800px;transform:scaleX(1.1191);transform-origin:0 50%;-webkit-text-stroke:0.18px #1f2329;">--</span>
<span id="t104" style="left:1511.4px;top:643px;font-size:13px;color:#7f8a9c;letter-spacing:-0.214px;-webkit-text-stroke:0.14px #7f8a9c;">Consegnato</span>
<span id="t105" style="left:1580px;top:643px;font-size:13px;color:#1f2329;letter-spacing:0.800px;transform:scaleX(1.1085);transform-origin:0 50%;-webkit-text-stroke:0.18px #1f2329;">--</span>
<div style="left:1680px;top:619px;width:4px;height:1px;background:#4a5565;"></div>
<span id="t106" style="left:1779.2px;top:601px;font-size:13px;color:#c0c4cc;letter-spacing:0.053px;-webkit-text-stroke:0.14px #c0c4cc;">Dettagli trasporto</span>
<div style="left:1779.2px;top:624px;width:127.8px;height:22px;overflow:hidden;">
<span id="t107" style="left:0px;top:1px;font-size:13px;color:#10896b;letter-spacing:-0.073px;-webkit-text-stroke:0.14px #10896b;">Richieste nuovo controllo</span>
</div>
<span id="t108" style="left:1779.2px;top:651px;font-size:15px;color:#10896b;letter-spacing:-0.250px;transform:scaleX(0.9321);transform-origin:0 50%;-webkit-text-stroke:0.3px #10896b;">...</span>
<div style="left:931.4px;top:393px;width:151px;height:218px;background:#fff;border-radius:4px;border:1px solid #e4e7ed;box-shadow:0 2px 12px rgba(0,0,0,.12);"></div>
<svg style="left:994px;top:386.2px;" width="14" height="8" viewBox="0 0 14 8" fill="none"><path d="M1 7.6 L7 1.6 L13 7.6" fill="#fff" stroke="#e4e7ed" stroke-width="1"/></svg>
<div style="left:932.4px;top:400px;width:149px;height:34px;background:#f5f7fa;"></div>
<span id="t109" style="left:952.7px;top:407px;font-size:13px;color:#10896b;letter-spacing:-0.250px;transform:scaleX(0.9931);transform-origin:0 50%;-webkit-text-stroke:0.14px #10896b;">N. ordine</span>
<span id="t110" style="left:952.7px;top:441px;font-size:13px;color:#3a414d;letter-spacing:-0.250px;transform:scaleX(0.9824);transform-origin:0 50%;-webkit-text-stroke:0.14px #3a414d;">Nr. Pacco</span>
<span id="t111" style="left:952.7px;top:475px;font-size:13px;color:#3a414d;letter-spacing:-0.218px;-webkit-text-stroke:0.14px #3a414d;">N. Tracciamento</span>
<span id="t112" style="left:952.7px;top:509px;font-size:13px;color:#3a414d;letter-spacing:-0.250px;-webkit-text-stroke:0.14px #3a414d;">Destinazione</span>
<span id="t113" style="left:952.7px;top:543px;font-size:13px;color:#3a414d;letter-spacing:-0.250px;transform:scaleX(0.9961);transform-origin:0 50%;-webkit-text-stroke:0.14px #3a414d;">Spedizione da</span>
<span id="t114" style="left:952.7px;top:577px;font-size:13px;color:#3a414d;letter-spacing:-0.207px;-webkit-text-stroke:0.14px #3a414d;">Nome acquirente</span>
<div style="left:215.3px;top:292.5px;width:1564.3px;height:113px;border:4px solid #f0443a;border-radius:6px;"></div>
<div style="left:1852.8px;top:646.9px;width:48px;height:48px;border-radius:50%;background:#fff;box-shadow:0 2px 10px rgba(0,0,0,.10);"></div>
<svg style="left:1865px;top:661px;" width="24" height="21" viewBox="0 0 24 21" fill="none">
<path d="M3.2 10.4 Q3.2 2.6 12 2.6 Q20.8 2.6 20.8 10.4" stroke="#17a32b" stroke-width="1.6"/>
<rect x="1" y="8.2" width="3.6" height="6.2" rx="1.6" fill="#17a32b"/>
<rect x="19.4" y="8.2" width="3.6" height="6.2" rx="1.6" fill="#17a32b"/>
<path d="M12 4.6 Q18.4 4.6 18.4 9.8 Q18.4 15 12 15 Q10.8 15 9.8 14.8 L6.6 16.4 L7.4 13.6 Q5.6 12.2 5.6 9.8 Q5.6 4.6 12 4.6 Z" fill="#17a32b"/>
<path d="M21 14 Q21 18.4 15 18.6" stroke="#17a32b" stroke-width="1.3"/>
<rect x="11.4" y="17.4" width="4.2" height="2.4" rx="1.2" fill="#17a32b"/>
</svg>
<div style="left:1907.4px;top:37px;width:7px;height:57px;background:#cdd0d4;border-radius:3.5px;"></div>
</div></body></html>
